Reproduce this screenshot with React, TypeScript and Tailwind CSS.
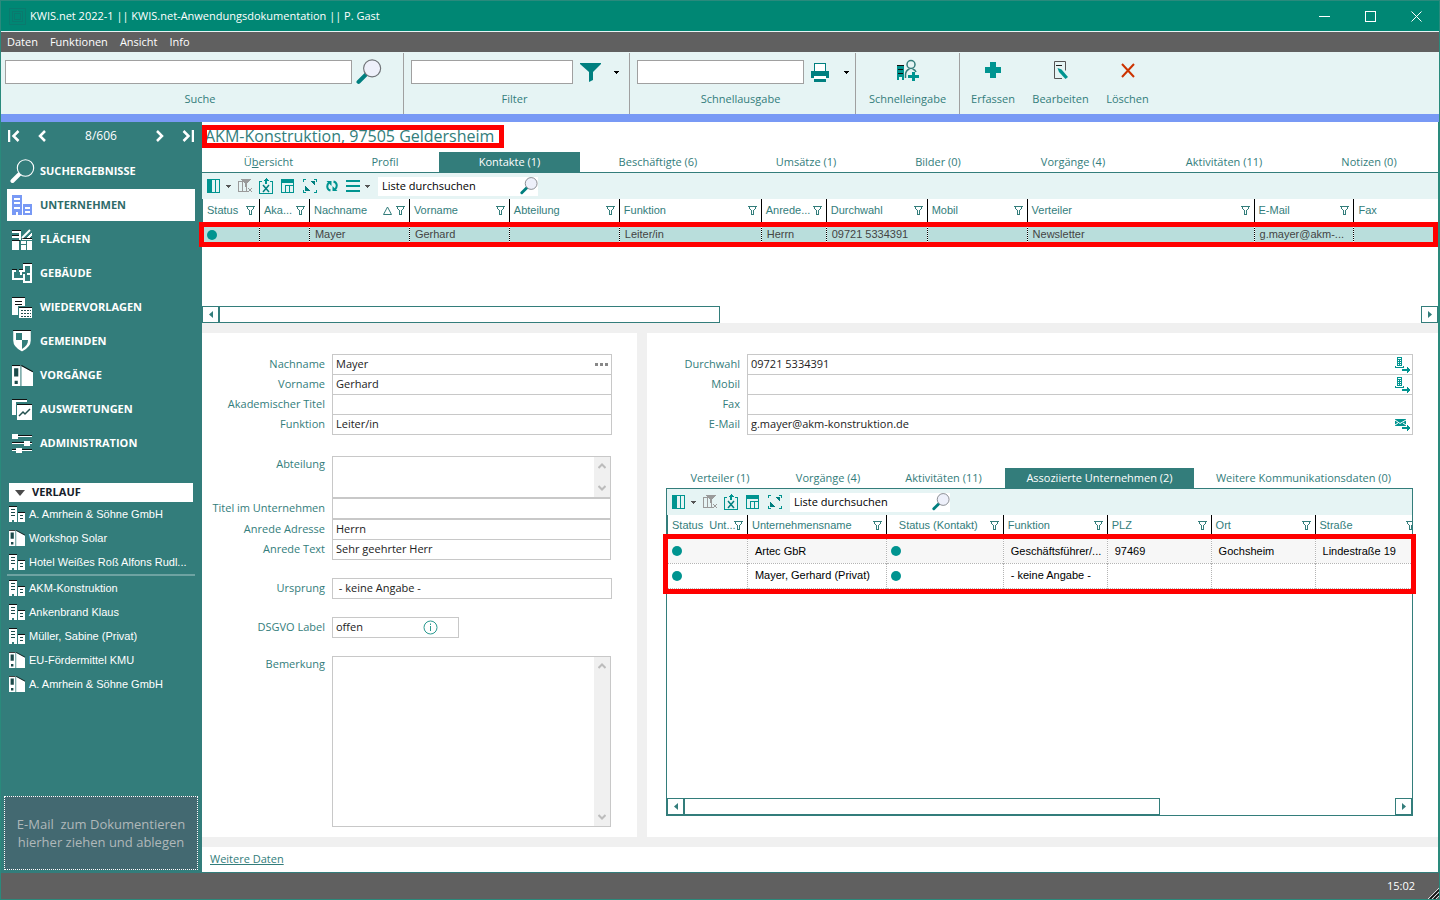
import type { ReactNode } from "react";
import { clsx } from "clsx";

interface Column {
  label: string;
  width: number;
  filter?: boolean;
  sorted?: boolean;
  pad?: boolean;
}

interface TabDef {
  label: string;
  grow: string;
  active?: boolean;
  accessKey?: number;
}

interface HistoryEntry {
  label: string;
  kind: "company" | "case";
}

const contactTabs: TabDef[] = [
  { label: "Übersicht", grow: "flex-[125]", accessKey: 1 },
  { label: "Profil", grow: "flex-[108]" },
  { label: "Kontakte (1)", grow: "flex-[141]", active: true },
  { label: "Beschäftigte (6)", grow: "flex-[156]" },
  { label: "Umsätze (1)", grow: "flex-[140]" },
  { label: "Bilder (0)", grow: "flex-[124]" },
  { label: "Vorgänge (4)", grow: "flex-[146]" },
  { label: "Aktivitäten (11)", grow: "flex-[156]" },
  { label: "Notizen (0)", grow: "flex-[134]" },
];

const detailTabs: TabDef[] = [
  { label: "Verteiler (1)", grow: "flex-[108]" },
  { label: "Vorgänge (4)", grow: "flex-[108]" },
  { label: "Aktivitäten (11)", grow: "flex-[123]" },
  { label: "Assoziierte Unternehmen (2)", grow: "flex-[189]", active: true },
  { label: "Weitere Kommunikationsdaten (0)", grow: "flex-[219]" },
];

const contactColumns: Column[] = [
  { label: "Status", width: 57, filter: true },
  { label: "Aka...", width: 50, filter: true },
  { label: "Nachname", width: 100, filter: true, sorted: true },
  { label: "Vorname", width: 100, filter: true },
  { label: "Abteilung", width: 110, filter: true },
  { label: "Funktion", width: 142, filter: true },
  { label: "Anrede...", width: 65, filter: true },
  { label: "Durchwahl", width: 101, filter: true },
  { label: "Mobil", width: 100, filter: true },
  { label: "Verteiler", width: 227, filter: true },
  { label: "E-Mail", width: 100, filter: true },
  { label: "Fax", width: 84 },
];

const contactRow = [
  "", "", "Mayer", "Gerhard", "", "Leiter/in", "Herrn", "09721 5334391", "", "Newsletter", "g.mayer@akm-...", "",
];

const companyColumns: Column[] = [
  { label: "Status  Unt...", width: 80, filter: true },
  { label: "Unternehmensname", width: 139, filter: true },
  { label: "Status (Kontakt)", width: 117, filter: true, pad: true },
  { label: "Funktion", width: 104, filter: true },
  { label: "PLZ", width: 104, filter: true },
  { label: "Ort", width: 104, filter: true },
  { label: "Straße", width: 104, filter: true },
];

const companyRows = [
  ["●", "Artec GbR", "●", "Geschäftsführer/...", "97469", "Gochsheim", "Lindestraße 19"],
  ["●", "Mayer, Gerhard (Privat)", "●", "- keine Angabe -", "", "", ""],
];

const recent: HistoryEntry[] = [
  { label: "A. Amrhein & Söhne GmbH", kind: "company" },
  { label: "Workshop Solar", kind: "case" },
  { label: "Hotel Weißes Roß Alfons Rudl...", kind: "company" },
];

const older: HistoryEntry[] = [
  { label: "AKM-Konstruktion", kind: "company" },
  { label: "Ankenbrand Klaus", kind: "company" },
  { label: "Müller, Sabine (Privat)", kind: "company" },
  { label: "EU-Fördermittel KMU", kind: "case" },
  { label: "A. Amrhein & Söhne GmbH", kind: "case" },
];

/* ---------- icons ---------- */

function Svg({ w, h, box, children, crisp = true }: { w: number; h: number; box?: string; children: ReactNode; crisp?: boolean }) {
  return (
    <svg
      width={w}
      height={h}
      viewBox={box ?? `0 0 ${w} ${h}`}
      fill="none"
      shapeRendering={crisp ? "crispEdges" : "auto"}
      className="block shrink-0"
      aria-hidden="true"
    >
      {children}
    </svg>
  );
}

function Magnifier({ size, light }: { size: number; light?: boolean }) {
  return (
    <Svg w={size} h={size} box="0 0 25 25" crisp={false}>
      <path d="M9.5 15 2.5 22" stroke={light ? "#fff" : "#007f7f"} strokeWidth="4" strokeLinecap="round" />
      <circle cx="15.5" cy="9" r="8.2" fill={light ? "#337d7b" : "#eef0fa"} stroke={light ? "#fff" : "#707478"} strokeWidth="1.1" />
    </Svg>
  );
}

function Buildings({ color, hole }: { color: string; hole: string }) {
  return (
    <Svg w={20} h={20}>
      <path d="M0 0h10v20H0zM11 9h9v11h-9z" fill={color} />
      <path d="M2 3h6v2H2zM2 7h6v2H2zM2 12h6v2H2zM4 17h2v3H4zM13 12h5v2h-5zM13 16h5v2h-5z" fill={hole} />
    </Svg>
  );
}

function SmallBuildings() {
  return (
    <Svg w={16} h={16}>
      <path d="M0 0h8v1H0zM9 6h7v1H9z" fill="#111" />
      <path d="M0 1h8v15H5v-2H3v2H0zM9 7h7v9H9z" fill="#fff" />
      <path d="M2 3h4v1H2zM2 6h4v1H2zM2 9h4v1H2zM11 9h3v1h-3zM11 12h3v1h-3z" fill="#1c4a4a" />
    </Svg>
  );
}

function Binder({ size }: { size: number }) {
  return (
    <Svg w={size} h={size} box="0 0 20 20" crisp={false}>
      <path d="M0 0h8v20H0z" fill="#fff" />
      <path d="M0 0h8v1H0z" fill="#111" />
      <path d="M2 3h4v8H2zM2.5 15h3v3h-3z" fill="#1c4a4a" />
      <path d="M9 1l11 6v13H9z" fill="#fff" />
      <path d="M9 .5l11 6" stroke="#111" />
    </Svg>
  );
}

function AreasIcon() {
  return (
    <Svg w={20} h={21}>
      <path d="M0 1h9v1H0zM0 6h8v1H0zM0 11h8v1H0zM10 9h10v1H10z" fill="#111" />
      <path d="M0 2h9v2H0zM0 7h8v2H0zM7 2h2v9H7zM0 12h7v9H0zM9 12h11v9H9zM10 10h10v1H10z" fill="#fff" />
      <path d="M10 9l8-8" stroke="#fff" strokeWidth="2" shapeRendering="auto" />
      <path d="M14 9l6-6v3l-3 3z" fill="#fff" />
      <path d="M14.5 12v9M9 15.5h5" stroke="#337d7b" />
    </Svg>
  );
}

function FloorplanIcon() {
  return (
    <Svg w={20} h={21}>
      <path d="M0 6h5v1H0zM7 6h5v1H7zM11 0h9v1h-9z" fill="#111" />
      <path d="M4 8H1v8h10M7 8h5V2h7v17h-7v-8M9 8v4M15 11h4" stroke="#fff" strokeWidth="2" />
    </Svg>
  );
}

function ReminderIcon() {
  return (
    <Svg w={20} h={21}>
      <path d="M0 1h13v8H6v9H0z" fill="#fff" />
      <path d="M0 0h13v1H0zM3 4h7v1H3zM3 7h7v1H3z" fill="#111" />
      <path d="M7 11h13v10H7z" fill="#fff" />
      <path d="M7 10h13v1H7z" fill="#111" />
      <path d="M9 13.5h10M9 16.5h10M9 19.5h10" stroke="#24504f" strokeDasharray="2 1" />
    </Svg>
  );
}

function ShieldIcon() {
  return (
    <Svg w={20} h={22} crisp={false}>
      <path d="M2 1.5h16v9c0 5-4 8-8 10-4-2-8-5-8-10z" fill="#fff" stroke="#fff" strokeWidth="1.5" />
      <path d="M4 3h6v7H4zM10 10h6c0 4-2 6.500-6 9z" fill="#337d7b" />
      <path d="M1 .5h18" stroke="#111" />
    </Svg>
  );
}

function ReportsIcon() {
  return (
    <Svg w={20} h={21}>
      <path d="M0 1h15v2H4v13H0z" fill="#fff" />
      <path d="M0 0h15v1H0zM5 5h15v1H5z" fill="#111" />
      <path d="M5 6h15v15H5z" fill="#fff" />
      <path d="M7 17l4-4 2 2 5-5" stroke="#24504f" strokeWidth="1.500" shapeRendering="auto" />
    </Svg>
  );
}

function SlidersIcon() {
  return (
    <Svg w={20} h={21}>
      <path d="M0 2h20v1H0zM0 9h20v1H0zM0 16h20v1H0z" fill="#111" />
      <path d="M0 3h20v1H0zM0 10h20v1H0zM0 17h20v1H0z" fill="#fff" />
      <path d="M0 1h6v5H0zM12 8h6v5h-6zM4 15h6v5H4z" fill="#fff" />
    </Svg>
  );
}

function FunnelOutline() {
  return (
    <Svg w={9} h={9}>
      <path d="M0 0h9v1H0zM1 1h1v2H1zM7 1h1v2H7zM2 3h1v1H2zM6 3h1v1H6zM3 4h1v5H3zM5 4h1v5H5zM3 8h3v1H3z" fill="#337d7b" />
    </Svg>
  );
}

function Caret({ color = "#000" }: { color?: string }) {
  return (
    <Svg w={5} h={3}>
      <path d="M0 0h5v1H0zM1 1h3v1H1zM2 2h1v1H2z" fill={color} />
    </Svg>
  );
}

const listIcons = {
  columns: (
    <Svg w={13} h={14}>
      <path d="M0 0h13v14H0z" fill="#009490" />
      <path d="M5 1h3v12H5zM9 1h3v12H9z" fill="#e6f4f4" />
    </Svg>
  ),
  clearFilter: (
    <Svg w={16} h={15}>
      <path d="M1 2h4M1.500 2v10M.500 12.500h10M5.500 2v10M9.500 8v5" stroke="#9a9a9a" />
      <path d="M4 0h10v1l-4 3v4H8V4L4 1z" fill="#9a9a9a" />
      <path d="M11 9l4 4M15 9l-4 4" stroke="#9a9a9a" shapeRendering="auto" />
    </Svg>
  ),
  exportExcel: (
    <Svg w={14} h={16}>
      <path d="M3 3.500H.500v12h13v-12H11" stroke="#009490" />
      <path d="M7 0l3 3H8v3H6V3H4z" fill="#009490" />
      <path d="M4 7l6 7M10 7l-6 7" stroke="#007f7f" strokeWidth="1.500" shapeRendering="auto" />
    </Svg>
  ),
  layout: (
    <Svg w={13} h={14}>
      <path d="M0 0h13v14H0z" fill="#009490" />
      <path d="M1 4h11v2H1zM1 6h3v7H1zM5 7h3v6H5zM9 7h3v6H9z" fill="#e6f4f4" />
    </Svg>
  ),
  expand: (
    <Svg w={14} h={14}>
      <path d="M0 3V.500h3M11 .500h2.500V3M0 11v2.500h3M11 13.500h2.500V11" stroke="#009490" />
      <path d="M7 2h5v5zM2 7v5h5z" fill="#007f7f" />
    </Svg>
  ),
  refresh: (
    <Svg w={12} h={12} crisp={false}>
      <path d="M4.500 10.500C.500 9.500 .500 5 3 2.500M7.500 1.500c4 1 4 5.500 1.500 8" stroke="#009490" strokeWidth="2" />
      <path d="M.500 1H5.500v5zM11.500 11h-5V6z" fill="#009490" />
    </Svg>
  ),
  menu: (
    <Svg w={14} h={12}>
      <path d="M0 0h14v2H0zM0 5h14v2H0zM0 10h14v2H0z" fill="#009490" />
    </Svg>
  ),
};

function PhoneForward() {
  return (
    <Svg w={16} h={16}>
      <path d="M2 0h5v9h2v2H0V9h2z" fill="#009490" />
      <path d="M3 1h3v1H3zM3 3h1v1H3zM5 3h1v1H5zM3 5h1v1H3zM5 5h1v1H5zM3 7h1v1H3zM5 7h1v1H5zM1 9h7v1H1z" fill="#fff" />
      <path d="M7 12h5v-2l4 3-4 3v-2H7z" fill="#009490" />
    </Svg>
  );
}

function MailForward() {
  return (
    <Svg w={16} h={12}>
      <path d="M0 0h11v7H0z" fill="#009490" />
      <path d="M0 1l5 3.500L11 1M0 6l3-2M11 6L8 4" stroke="#fff" shapeRendering="auto" />
      <path d="M7 8h5V6l4 3-4 3v-2H7z" fill="#009490" />
    </Svg>
  );
}

/* ---------- shared parts ---------- */

function TabStrip({ tabs, name }: { tabs: TabDef[]; name: string }) {
  return (
    <div role="tablist" aria-label={name} className="flex h-5 text-[11px] text-[#337d7b]">
      {tabs.map((t) => (
        <button
          key={t.label}
          type="button"
          role="tab"
          aria-selected={!!t.active}
          className={clsx("min-w-0 whitespace-nowrap text-center leading-5", t.grow, t.active && "bg-[#337d7b] text-white")}
        >
          {t.accessKey !== undefined ? (
            <>
              {t.label.slice(0, t.accessKey)}
              <span className="underline">{t.label[t.accessKey]}</span>
              {t.label.slice(t.accessKey + 1)}
            </>
          ) : (
            t.label
          )}
        </button>
      ))}
    </div>
  );
}

function ListToolbar({ id, full }: { id: string; full?: boolean }) {
  return (
    <div className="flex h-[26px] items-center bg-[#e6f4f4] pl-[5px]">
      <button type="button" aria-label="Spalten" className="flex items-center gap-1.5">
        {listIcons.columns}
        <Caret color="#555" />
      </button>
      <button type="button" aria-label="Filter entfernen" className="ml-1.5">{listIcons.clearFilter}</button>
      <button type="button" aria-label="Exportieren" className="ml-1.5">{listIcons.exportExcel}</button>
      <button type="button" aria-label="Layout" className="ml-2">{listIcons.layout}</button>
      <button type="button" aria-label="Maximieren" className="ml-[9px]">{listIcons.expand}</button>
      {full && (
        <>
          <button type="button" aria-label="Aktualisieren" className="ml-[9px]">{listIcons.refresh}</button>
          <button type="button" aria-label="Menü" className="ml-2 flex items-center gap-[5px]">
            {listIcons.menu}
            <Caret color="#555" />
          </button>
        </>
      )}
      <div className="ml-2 flex h-[19px] w-40 items-center bg-white pl-1">
        <input
          id={id}
          aria-label="Liste durchsuchen"
          defaultValue="Liste durchsuchen"
          className="min-w-0 flex-1 bg-transparent text-[11px] text-black outline-none"
        />
        <Magnifier size={18} />
      </div>
    </div>
  );
}

function HeadCell({ col, first }: { col: Column; first: boolean }) {
  return (
    <th
      scope="col"
      className={clsx("overflow-hidden border-l p-0 text-left font-normal", first ? "border-[#337d7b]" : "border-black")}
    >
      <div className={clsx("flex items-center pr-1", col.pad ? "pl-3" : "pl-1")}>
        <span className="min-w-0 flex-1 whitespace-pre">{col.label}</span>
        {col.sorted && (
          <span className="mr-1">
            <Svg w={9} h={9} crisp={false}>
              <path d="M4.500 1L8.500 8.500H.500z" stroke="#337d7b" />
            </Svg>
          </span>
        )}
        {col.filter && <FunnelOutline />}
      </div>
    </th>
  );
}

function ColWidths({ columns }: { columns: Column[] }) {
  const total = columns.reduce((sum, c) => sum + c.width, 0);
  return (
    <colgroup>
      {columns.map((c) => (
        <col key={c.label} style={{ width: `${(c.width / total) * 100}%` }} />
      ))}
    </colgroup>
  );
}

function StatusDot() {
  return <span role="img" aria-label="aktiv" className="block size-2.5 rounded-full bg-[#009490]" />;
}

function ScrollBar({ thumb }: { thumb: string }) {
  return (
    <div className="flex h-[17px]">
      <button type="button" aria-label="Nach links" className="grid w-[17px] shrink-0 place-items-center border border-[#337d7b]">
        <Svg w={4} h={7} crisp={false}>
          <path d="M4 0v7L0 3.500z" fill="#337d7b" />
        </Svg>
      </button>
      <div className="min-w-0 flex-1">
        <div className={clsx("h-full border border-[#337d7b]", thumb)} />
      </div>
      <button type="button" aria-label="Nach rechts" className="grid w-[17px] shrink-0 place-items-center border border-[#337d7b]">
        <Svg w={4} h={7} crisp={false}>
          <path d="M0 0v7l4-3.500z" fill="#337d7b" />
        </Svg>
      </button>
    </div>
  );
}

function Field({
  id,
  label,
  value = "",
  labelWidth = "w-[123px]",
  width = "w-[280px] pr-[3px]",
  joined,
  children,
}: {
  id: string;
  label: string;
  value?: string;
  labelWidth?: string;
  width?: string;
  joined?: boolean;
  children?: ReactNode;
}) {
  return (
    <div className={clsx("flex gap-[7px]", joined && "-mt-px")}>
      <label htmlFor={id} className={clsx("shrink-0 whitespace-nowrap text-right leading-5 text-[#337d7b]", labelWidth)}>
        {label}
      </label>
      <div className={clsx("flex h-[21px] items-center border border-[#c8c8c8] bg-white", width)}>
        <input id={id} defaultValue={value} className="min-w-0 flex-1 bg-transparent pl-[3px] text-[#222] outline-none" />
        {children}
      </div>
    </div>
  );
}

function MemoField({ id, label, height }: { id: string; label: string; height: string }) {
  return (
    <div className="flex gap-[7px]">
      <label htmlFor={id} className="w-[123px] shrink-0 text-right leading-4 text-[#337d7b]">
        {label}
      </label>
      <div className={clsx("flex w-[279px] border border-[#c8c8c8]", height)}>
        <textarea id={id} className="min-w-0 flex-1 resize-none overflow-hidden bg-white px-1 outline-none" />
        <div className="flex w-4 flex-col items-center justify-between bg-[#f0f0f0] py-1.5">
          <Svg w={8} h={6} crisp={false}>
            <path d="M.500 5L4 1.500 7.500 5" stroke="#bcbcbc" strokeWidth="2" />
          </Svg>
          <Svg w={8} h={6} crisp={false}>
            <path d="M.500 1L4 4.500 7.500 1" stroke="#bcbcbc" strokeWidth="2" />
          </Svg>
        </div>
      </div>
    </div>
  );
}

/* ---------- window frame ---------- */

function TitleBar() {
  return (
    <header className="flex h-[31px] items-center border-b border-[#e6f4f4] bg-[#008774] pl-2 text-white">
      <Svg w={17} h={17}>
        <path d="M.500 .500h16v16H.500zM3.500 3.500h10v10h-10zM5.500 5.500h6v6h-6z" stroke="#0a7a6e" />
      </Svg>
      <h1 className="flex-1 pl-1 text-[11px] font-normal">KWIS.net 2022-1 || KWIS.net-Anwendungsdokumentation || P. Gast</h1>
      <button type="button" aria-label="Minimieren" className="grid h-full w-[46px] place-items-center">
        <Svg w={11} h={11}><path d="M0 5.500h11" stroke="#fff" /></Svg>
      </button>
      <button type="button" aria-label="Maximieren" className="grid h-full w-[46px] place-items-center">
        <Svg w={11} h={11}><path d="M.500 .500h10v10H.500z" stroke="#fff" /></Svg>
      </button>
      <button type="button" aria-label="Schließen" className="grid h-full w-[46px] place-items-center">
        <Svg w={11} h={11} crisp={false}><path d="M.500 .500l10 10M10.500 .500l-10 10" stroke="#fff" /></Svg>
      </button>
    </header>
  );
}

function MenuBar() {
  return (
    <nav aria-label="Hauptmenü" className="flex h-5 items-center gap-3 bg-[#606060] pl-1.5 text-[11px] leading-5 text-white">
      {["Daten", "Funktionen", "Ansicht", "Info"].map((m) => (
        <button key={m} type="button">{m}</button>
      ))}
    </nav>
  );
}

function RibbonSearch({ id, label, width, padding, children }: { id: string; label: string; width: string; padding: string; children: ReactNode }) {
  return (
    <div className={clsx("flex flex-col border-r border-[#a0a0a0] pt-[7px]", width)}>
      <div className={clsx("flex h-6 items-center", padding)}>
        <input id={id} className="h-6 min-w-0 flex-1 border border-[#a0a0a0] bg-white px-1 outline-none" />
        {children}
      </div>
      <label htmlFor={id} className="pt-[7px] pr-1 text-center leading-4">{label}</label>
    </div>
  );
}

function RibbonAction({ label, width, children }: { label: string; width: string; children: ReactNode }) {
  return (
    <button type="button" className={clsx("flex flex-col items-center pt-1", width)}>
      <span className="grid h-[26px] place-items-center">{children}</span>
      <span className="pt-2 leading-4">{label}</span>
    </button>
  );
}

function Ribbon() {
  return (
    <div className="flex h-[70px] border-b-8 border-[#7899f5] bg-[#e6f4f4] pt-px text-[11px] text-[#337d7b]">
      <RibbonSearch id="suche" label="Suche" width="w-[403px]" padding="pl-1 pr-[21px]">
        <button type="button" aria-label="Suchen" className="ml-1"><Magnifier size={26} /></button>
      </RibbonSearch>
      <RibbonSearch id="filter" label="Filter" width="w-[226px]" padding="pl-[7px] pr-2.5">
        <button type="button" aria-label="Filtern" className="ml-[7px] flex items-center gap-[13px]">
          <Svg w={21} h={19} crisp={false}>
            <path d="M0 0h21v1l-8 8v8l-4 2V9L0 1z" fill="#007f7f" />
          </Svg>
          <Caret />
        </button>
      </RibbonSearch>
      <RibbonSearch id="ausgabe" label="Schnellausgabe" width="w-[226px]" padding="pl-[7px] pr-1.5">
        <button type="button" aria-label="Drucken" className="ml-[7px] flex items-center gap-[15px]">
          <Svg w={18} h={19}>
            <path d="M3 0h12v8h3v7h-3v4H3v-4H0V8h3z" fill="#007f7f" />
            <path d="M4 1h10v7H4zM3 13h12v3H3z" fill="#fff" />
          </Svg>
          <Caret />
        </button>
      </RibbonSearch>
      <div className="flex border-r border-[#a0a0a0]">
        <RibbonAction label="Schnelleingabe" width="w-[103px]">
          <Svg w={22} h={22} crisp={false}>
            <path d="M0 7h7v14H5v-3H2v3H0z" fill="#009490" />
            <path d="M0 6h7v1H0zM1 10h5v1H1zM1 14h5v1H1z" fill="#111" />
            <circle cx="14" cy="5.500" r="4" stroke="#337d7b" strokeWidth="1.500" />
            <path d="M8.500 19v-3c0-3 1.500-5 4-6M15.500 10c2 .500 3 1.500 3.500 3" stroke="#337d7b" strokeWidth="1.500" />
            <path d="M15 13h3v3h4v3h-4v3h-3v-3h-4v-3h4z" fill="#009490" />
          </Svg>
        </RibbonAction>
      </div>
      <RibbonAction label="Erfassen" width="w-[66px]">
        <Svg w={16} h={16}><path d="M5 0h6v5h5v6h-5v5H5v-5H0V5h5z" fill="#009490" /></Svg>
      </RibbonAction>
      <RibbonAction label="Bearbeiten" width="w-[69px]">
        <Svg w={16} h={19} crisp={false}>
          <path d="M9 17.500H1.500V.500h11v9" stroke="#555" />
          <path d="M3 4.500h6" stroke="#222" />
          <path d="M4.500 7l4 1.500 6.500 7.500-2.500 2L6 11z" fill="#009490" />
        </Svg>
      </RibbonAction>
      <RibbonAction label="Löschen" width="w-[65px]">
        <Svg w={14} h={15} crisp={false}><path d="M1 1l12 13M13 1L1 14" stroke="#cc3300" strokeWidth="2" /></Svg>
      </RibbonAction>
    </div>
  );
}

function HistoryList({ entries }: { entries: HistoryEntry[] }) {
  return (
    <ul>
      {entries.map((e) => (
        <li key={e.label}>
          <button type="button" className="flex h-6 w-full items-center gap-1 pl-2 text-left font-['Liberation_Sans',Arial,sans-serif] text-[11px] whitespace-nowrap">
            {e.kind === "company" ? <SmallBuildings /> : <Binder size={16} />}
            {e.label}
          </button>
        </li>
      ))}
    </ul>
  );
}

function Sidebar() {
  const modules: { label: string; icon: ReactNode; active?: boolean }[] = [
    { label: "SUCHERGEBNISSE", icon: <Magnifier size={25} light /> },
    { label: "UNTERNEHMEN", icon: <Buildings color="#7899f5" hole="#fff" />, active: true },
    { label: "FLÄCHEN", icon: <AreasIcon /> },
    { label: "GEBÄUDE", icon: <FloorplanIcon /> },
    { label: "WIEDERVORLAGEN", icon: <ReminderIcon /> },
    { label: "GEMEINDEN", icon: <ShieldIcon /> },
    { label: "VORGÄNGE", icon: <Binder size={21} /> },
    { label: "AUSWERTUNGEN", icon: <ReportsIcon /> },
    { label: "ADMINISTRATION", icon: <SlidersIcon /> },
  ];
  return (
    <aside className="flex w-[201px] shrink-0 flex-col bg-[#337d7b] pr-px text-white">
      <div className="flex h-8 items-center px-[7px] pb-1 text-[12px]">
        <button type="button" aria-label="Erster Datensatz">
          <Svg w={12} h={12} crisp={false}><path d="M1 0v12M10.500 1l-5 5 5 5" stroke="#fff" strokeWidth="2.500" /></Svg>
        </button>
        <button type="button" aria-label="Vorheriger Datensatz" className="ml-[18px]">
          <Svg w={8} h={12} crisp={false}><path d="M7 1L2 6l5 5" stroke="#fff" strokeWidth="2.500" /></Svg>
        </button>
        <span className="flex-1 text-center">8/606</span>
        <button type="button" aria-label="Nächster Datensatz">
          <Svg w={8} h={12} crisp={false}><path d="M1 1l5 5-5 5" stroke="#fff" strokeWidth="2.500" /></Svg>
        </button>
        <button type="button" aria-label="Letzter Datensatz" className="ml-[18px]">
          <Svg w={12} h={12} crisp={false}><path d="M1.500 1l5 5-5 5M11 0v12" stroke="#fff" strokeWidth="2.500" /></Svg>
        </button>
      </div>
      <nav aria-label="Module" className="flex flex-col gap-0.5 px-1.5 pt-px">
        {modules.map((m) => (
          <button
            key={m.label}
            type="button"
            className={clsx("flex h-8 items-center text-[11px] font-bold", m.active && "bg-white text-[#2f6b69]")}
          >
            <span className="grid w-[30px] place-items-center">{m.icon}</span>
            <span className="pl-[3px]">{m.label}</span>
          </button>
        ))}
      </nav>
      <button type="button" aria-expanded="true" className="mx-2 mt-6 flex h-[19px] items-center gap-[7px] bg-white pl-1.5 text-[11px] font-bold text-[#16202a]">
        <Svg w={10} h={6} crisp={false}><path d="M0 0h10L5 6z" fill="#4a4a4a" /></Svg>
        VERLAUF
      </button>
      <HistoryList entries={recent} />
      <hr className="mx-1.5 border-0 border-t-2 border-[#6ea3a2]" />
      <HistoryList entries={older} />
      <div className="mx-[3px] mt-auto mb-0.5 flex h-[74px] flex-col justify-center border border-dotted border-white bg-[#436971] text-center text-[13px] leading-[18px] whitespace-pre text-[#b0b8ba]">
        <p>E-Mail  zum Dokumentieren</p>
        <p>hierher ziehen und ablegen</p>
      </div>
    </aside>
  );
}

/* ---------- record ---------- */

function ContactList() {
  return (
    <section aria-label="Kontakte" className="flex h-[151px] flex-col border-t border-[#337d7b]">
      <ListToolbar id="kontakte-suche" full />
      <div className="relative flex-1">
        <table className="w-full table-fixed border-collapse font-['Liberation_Sans',Arial,sans-serif] text-[11px]">
          <ColWidths columns={contactColumns} />
          <thead>
            <tr className="h-[23px] text-[#337d7b]">
              {contactColumns.map((c, i) => (
                <HeadCell key={c.label} col={c} first={i === 0} />
              ))}
            </tr>
          </thead>
          <tbody>
            <tr className="h-[25px] bg-[#b9dedc] text-[#444]">
              {contactRow.map((v, i) => (
                <td
                  key={contactColumns[i].label}
                  className={clsx("overflow-hidden border-l border-dotted border-black p-0 whitespace-nowrap", i === 0 ? "pl-1" : "pl-[5px]")}
                >
                  {i === 0 ? <StatusDot /> : v}
                </td>
              ))}
            </tr>
          </tbody>
        </table>
        <div className="pointer-events-none absolute top-[23px] right-0 -left-[3px] h-[25px] border-[5px] border-[#ff0000]" />
      </div>
      <ScrollBar thumb="w-5/12" />
    </section>
  );
}

function PersonForm() {
  return (
    <section aria-label="Person" className="w-[435px] shrink-0 bg-white pt-[21px] text-[11px]">
      <Field id="nachname" label="Nachname" value="Mayer">
        <button type="button" aria-label="Name bearbeiten">
          <Svg w={13} h={3}><path d="M0 0h3v3H0zM5 0h3v3H5zM10 0h3v3h-3z" fill="#888" /></Svg>
        </button>
      </Field>
      <Field id="vorname" label="Vorname" value="Gerhard" joined />
      <Field id="titel" label="Akademischer Titel" joined />
      <Field id="funktion" label="Funktion" value="Leiter/in" joined />
      <div className="pt-[21px]">
        <MemoField id="abteilung" label="Abteilung" height="h-[42px]" />
        <Field id="firmentitel" label="Titel im Unternehmen" width="w-[279px]" />
        <Field id="anrede-adresse" label="Anrede Adresse" value="Herrn" width="w-[279px]" />
        <Field id="anrede-text" label="Anrede Text" value="Sehr geehrter Herr" width="w-[279px]" joined />
      </div>
      <div className="flex flex-col gap-[18px] pt-[18px] pb-2.5">
        <Field id="ursprung" label="Ursprung" value=" - keine Angabe -" />
        <Field id="dsgvo" label="DSGVO Label" value="offen" width="w-[127px]">
          <button type="button" aria-label="Information" className="mr-5">
            <Svg w={15} h={15} crisp={false}>
              <circle cx="7.500" cy="7.500" r="6.500" stroke="#2a9a90" />
              <path d="M7.500 6v5M7.500 3.500v1.500" stroke="#2a9a90" />
            </Svg>
          </button>
        </Field>
        <MemoField id="bemerkung" label="Bemerkung" height="h-[171px]" />
      </div>
    </section>
  );
}

function AssociatedCompanies() {
  return (
    <div className="ml-[19px] flex min-w-0 flex-1 flex-col">
      <TabStrip tabs={detailTabs} name="Kontaktdetails" />
      <div className="flex flex-1 flex-col border border-[#337d7b]">
        <ListToolbar id="assoziierte-suche" />
        <div className="relative flex-1">
          <div className="overflow-hidden">
            <table className="w-[calc(100%+7px)] table-fixed border-collapse font-['Liberation_Sans',Arial,sans-serif] text-[11px]">
              <ColWidths columns={companyColumns} />
              <thead>
                <tr className="h-5 text-[#337d7b]">
                  {companyColumns.map((c, i) => (
                    <HeadCell key={c.label} col={c} first={i === 0} />
                  ))}
                </tr>
              </thead>
              <tbody className="text-black">
                {companyRows.map((row, r) => (
                  <tr key={row[1]} className={clsx("border-b border-dotted border-[#b4b4b4]", r === 0 ? "h-7 bg-[#f7f7f7]" : "h-[25px]")}>
                    {row.map((v, i) => (
                      <td
                        key={companyColumns[i].label}
                        className={clsx(
                          "overflow-hidden p-0 pl-[7px] whitespace-nowrap",
                          r === 0 && "pt-1",
                          i > 0 && "border-l border-dotted border-[#b4b4b4]",
                        )}
                      >
                        {v === "●" ? <span className="-ml-[3px] block"><StatusDot /></span> : v}
                      </td>
                    ))}
                  </tr>
                ))}
              </tbody>
            </table>
          </div>
          <div className="pointer-events-none absolute top-[19px] -right-[4px] -left-[4px] h-[60px] border-[5px] border-[#ff0000]" />
        </div>
        <ScrollBar thumb="w-[67%]" />
      </div>
    </div>
  );
}

function ContactDetails() {
  const line = { labelWidth: "w-[93px]", width: "min-w-0 flex-1 pr-px" };
  return (
    <section aria-label="Kontaktdaten" className="flex min-w-0 flex-1 flex-col bg-white pt-[21px] pr-[25px] pb-[21px] text-[11px]">
      <Field id="durchwahl" label="Durchwahl" value="09721 5334391" {...line}>
        <button type="button" aria-label="Durchwahl anrufen"><PhoneForward /></button>
      </Field>
      <Field id="mobil" label="Mobil" joined {...line}>
        <button type="button" aria-label="Mobil anrufen"><PhoneForward /></button>
      </Field>
      <Field id="fax" label="Fax" joined {...line} />
      <Field id="email" label="E-Mail" value="g.mayer@akm-konstruktion.de" joined {...line}>
        <button type="button" aria-label="E-Mail schreiben"><MailForward /></button>
      </Field>
      <div className="flex flex-1 pt-[33px]">
        <AssociatedCompanies />
      </div>
    </section>
  );
}

export default function App() {
  return (
    <div className="flex min-h-screen flex-col border border-[#2a8a7c] bg-white font-['Open_Sans','Noto_Sans',sans-serif]">
      <TitleBar />
      <MenuBar />
      <Ribbon />
      <div className="flex flex-1">
        <Sidebar />
        <main className="flex min-w-0 flex-1 flex-col border-r border-[#2a8a7c]">
          <div className="flex h-[30px] pt-[3px]">
            <h2 className="relative h-[23px] pr-2.5 pl-[3px] text-[16px] leading-[23px] font-normal whitespace-nowrap text-[#337d7b]">
              AKM-Konstruktion, 97505 Geldersheim
              <span className="pointer-events-none absolute inset-0 border-[5px] border-[#ff0000]" />
            </h2>
          </div>
          <div className="pr-0.5 pl-1">
            <TabStrip tabs={contactTabs} name="Unternehmen" />
          </div>
          <ContactList />
          <div className="flex flex-1 gap-2.5 border-y-[10px] border-[#f0f0f0] bg-[#f0f0f0]">
            <PersonForm />
            <ContactDetails />
          </div>
          <div className="flex h-[25px] items-center pl-2 text-[11px]">
            <a href="#weitere-daten" className="text-[#337d7b] underline">Weitere Daten</a>
          </div>
        </main>
      </div>
      <footer className="flex h-[27px] items-center justify-end border-t border-[#337d7b] bg-[#606060] text-[11px] text-white">
        <time>15:02</time>
        <div className="ml-3 self-end">
          <Svg w={12} h={12} crisp={false}>
            <path d="M1 12L12 1M5 12l7-7M9 12l3-3" stroke="#ddd" />
            <path d="M3 12l9-9M7 12l5-5" stroke="#111" strokeWidth="1.500" />
          </Svg>
        </div>
      </footer>
    </div>
  );
}
